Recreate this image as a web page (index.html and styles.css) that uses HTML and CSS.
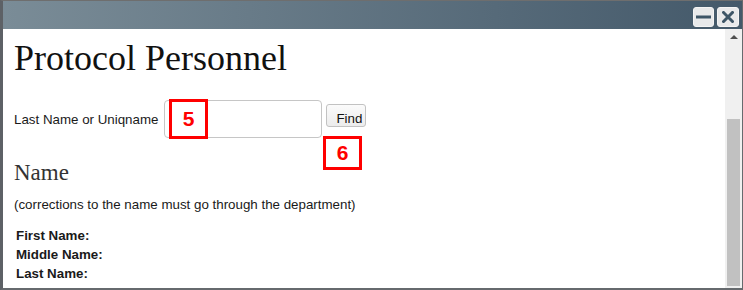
FILE: index.html
```html
<!DOCTYPE html>
<html lang="en">

<head>
  <meta charset="UTF-8" />
  <meta name="viewport" content="width=device-width, initial-scale=1.0" />
  <title>Protocol Personnel</title>
  <link rel="stylesheet" href="styles.css">
</head>

<body>
  <div class="window">
    <div class="titlebar">
      <button class="win-btn" aria-label="Minimize">
        <svg width="15" height="4" viewBox="0 0 15 4"><rect x="0" y="0.5" width="15" height="3" fill="#3d5566" /></svg>
      </button>
      <button class="win-btn win-btn-close" aria-label="Close">
        <svg width="12" height="12" viewBox="0 0 12 12"><path d="M1.5 1.5 L10.5 10.5 M10.5 1.5 L1.5 10.5" stroke="#3d5566" stroke-width="3" stroke-linecap="square" /></svg>
      </button>
    </div>

    <div class="main">
      <div class="content">
        <h1 class="page-title">Protocol Personnel</h1>

        <div class="search-row">
          <label for="lookup" class="label">Last Name or Uniqname</label>
          <input type="text" class="input" id="lookup" value="">
          <button class="find">Find</button>

          <!-- callout markers laid over the form -->
          <span class="marker marker-input">5</span>
          <span class="marker marker-find">6</span>
        </div>

        <h2 class="section-title">Name</h2>
        <p class="note">(corrections to the name must go through the department)</p>

        <div class="fields">
          <div class="field">First Name:</div>
          <div class="field">Middle Name:</div>
          <div class="field">Last Name:</div>
        </div>
      </div>

      <div class="scrollbar">
        <div class="scroll-arrow"></div>
        <div class="scroll-space"></div>
        <div class="scroll-thumb"></div>
      </div>
    </div>
  </div>
</body>

</html>
```

FILE: styles.css
```css
:root {
  --frame-color: #666a6e;
  --text-color: #1a1a1a;
  --marker-color: #ff0000;
}

html,
body {
  margin: 0;
  padding: 0;
}

body {
  font-family: 'Liberation Sans', Arial, sans-serif;
  font-size: 13.33px;
  color: var(--text-color);
  background-color: #ffffff;
}

.window {
  width: 743px;
  height: 290px;
  box-sizing: border-box;
  border-top: 1px solid #6e6e6e;
  border-left: 3px solid #5d6166;
  border-right: 1px solid var(--frame-color);
  border-bottom: 2px solid var(--frame-color);
  display: flex;
  flex-direction: column;
}

.titlebar {
  height: 28px;
  flex: none;
  display: flex;
  justify-content: flex-end;
  align-items: center;
  gap: 3px;
  padding-right: 3px;
  background: linear-gradient(to right, #7a8c97, #44596a);
}

.win-btn {
  width: 21px;
  height: 20px;
  margin-top: 3px;
  padding: 0;
  display: flex;
  align-items: center;
  justify-content: center;
  background-color: #e8e9ea;
  border: 1px solid #f4f4f4;
  border-radius: 3px;
}

.win-btn-close {
  width: 22px;
}

.main {
  flex: 1;
  display: flex;
  min-height: 0;
}

.content {
  flex: 1;
  padding: 0 11px;
}

.page-title {
  margin: 9px 0 0;
  font-family: 'Liberation Serif', 'Times New Roman', serif;
  font-size: 36px;
  font-weight: 400;
  line-height: 40px;
  color: #111111;
}

.search-row {
  position: relative;
  display: flex;
  align-items: flex-start;
  margin-top: 22px;
}

.label {
  margin-top: 12px;
  margin-right: 6px;
  line-height: 16px;
}

.input {
  width: 158px;
  height: 38px;
  box-sizing: border-box;
  margin: 0 4px 0 0;
  padding: 0 6px;
  border: 1px solid #c6c6c6;
  border-radius: 4px;
  font-family: inherit;
  font-size: inherit;
}

.find {
  height: 23px;
  box-sizing: border-box;
  margin-top: 4px;
  padding: 6px 3px 0 9px;
  font-family: inherit;
  font-size: 13.33px;
  line-height: 15px;
  color: #111111;
  background: linear-gradient(#fbfbfb, #ececec);
  border: 1px solid #c2c2c2;
  border-radius: 3px;
}

.marker {
  position: absolute;
  box-sizing: border-box;
  display: flex;
  align-items: center;
  justify-content: center;
  border: 3px solid var(--marker-color);
  color: var(--marker-color);
  font-weight: 700;
  font-size: 21px;
}

.marker-input {
  left: 155px;
  top: -1px;
  width: 39px;
  height: 40px;
}

.marker-find {
  left: 309px;
  top: 36px;
  width: 39px;
  height: 34px;
}

.section-title {
  margin: 22px 0 0;
  font-family: 'Liberation Serif', 'Times New Roman', serif;
  font-size: 23px;
  font-weight: 400;
  line-height: 26px;
  color: #333333;
}

.note {
  margin: 11px 0 0;
  line-height: 16px;
}

.fields {
  margin-top: 13px;
  padding-left: 2px;
}

.field {
  font-weight: 700;
  line-height: 19px;
}

.scrollbar {
  width: 17px;
  flex: none;
  display: flex;
  flex-direction: column;
  align-items: center;
  background-color: #f0f0f0;
}

.scroll-arrow {
  width: 0;
  height: 0;
  margin-top: 6px;
  margin-bottom: 7px;
  border-left: 4px solid transparent;
  border-right: 4px solid transparent;
  border-bottom: 4px solid #505050;
}

.scroll-space {
  flex: 1;
}

.scroll-thumb {
  width: 13px;
  height: 167px;
  margin-bottom: 2px;
  background-color: #c1c1c1;
}
```
